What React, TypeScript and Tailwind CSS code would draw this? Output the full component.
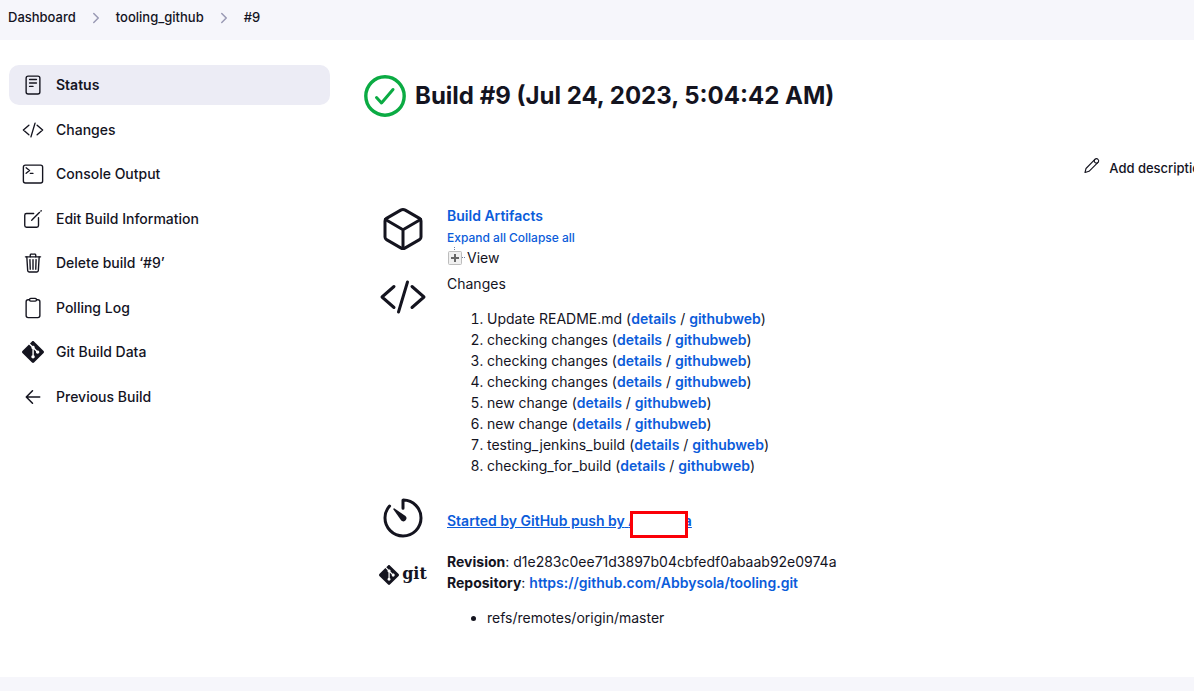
import type { ReactNode } from "react";
import {
  IoChevronForwardOutline,
  IoClipboardOutline,
  IoCodeSlashOutline,
  IoCreateOutline,
  IoCubeOutline,
  IoReaderOutline,
  IoTerminalOutline,
  IoTimerOutline,
  IoTrashOutline,
} from "react-icons/io5";
import { SiGit } from "react-icons/si";

function BackIcon() {
  return (
    <svg viewBox="0 0 512 512" className="size-[22px]" fill="none" stroke="currentColor" strokeWidth="36" strokeLinecap="round" strokeLinejoin="round">
      <path d="M244 400 100 256l144-144M120 256h292" />
    </svg>
  );
}

const crumbs = ["Dashboard", "tooling_github", "#9"];

const tasks: { label: string; icon: ReactNode; active?: boolean }[] = [
  { label: "Status", icon: <IoReaderOutline className="size-[22px]" />, active: true },
  { label: "Changes", icon: <IoCodeSlashOutline className="size-[22px]" /> },
  { label: "Console Output", icon: <IoTerminalOutline className="size-[22px]" /> },
  { label: "Edit Build Information", icon: <IoCreateOutline className="size-[22px]" /> },
  { label: "Delete build ‘#9’", icon: <IoTrashOutline className="size-[22px]" /> },
  { label: "Polling Log", icon: <IoClipboardOutline className="size-[22px]" /> },
  { label: "Git Build Data", icon: <SiGit className="size-[22px]" /> },
  { label: "Previous Build", icon: <BackIcon /> },
];

const changes = [
  "Update README.md",
  "checking changes",
  "checking changes",
  "checking changes",
  "new change",
  "new change",
  "testing_jenkins_build",
  "checking_for_build",
];

function Link({ children, className = "font-semibold" }: { children: ReactNode; className?: string }) {
  return (
    <a href="#" className={`text-[#0b5cda] ${className}`}>
      {children}
    </a>
  );
}

function Section({ icon, children, className = "" }: { icon: ReactNode; children: ReactNode; className?: string }) {
  return (
    <section className={`flex items-start gap-5 ${className}`}>
      <div className="flex size-12 shrink-0 items-center justify-center">{icon}</div>
      <div className="min-w-0">{children}</div>
    </section>
  );
}

function SuccessIcon() {
  return (
    <svg viewBox="0 0 42 42" className="size-[42px] shrink-0" fill="none" stroke="#0bab43" strokeLinecap="round" strokeLinejoin="round">
      <circle cx="21" cy="21" r="19.2" strokeWidth="3.4" />
      <path d="M12.5 22.5 17.5 28 29 14.5" strokeWidth="3" />
    </svg>
  );
}

function PencilIcon() {
  return (
    <svg viewBox="0 0 16 16" className="size-4" fill="none" stroke="currentColor" strokeWidth="1.1" strokeLinecap="round" strokeLinejoin="round">
      <path d="M1 15.5 2 11.5 10.9 2.3a2.1 2.1 0 0 1 3.1 0 2.1 2.1 0 0 1 0 3.1L5 14.3Z" />
      <path d="M10.9 2.3a2.2 2.2 0 0 0 0 3.1 2.2 2.2 0 0 0 3.1 0" />
    </svg>
  );
}

function ExpandIcon() {
  return (
    <svg viewBox="0 0 18 20" className="h-5 w-[18px]">
      <path d="M7.5 0v4M15 10.5h3" stroke="#7480a0" strokeDasharray="1 1" />
      <rect x="1.5" y="4.5" width="13" height="13" rx="1" fill="#f0f0f0" stroke="#bdbdbd" />
      <path d="M4 11h8M8 7v8" stroke="#666" strokeWidth="2" />
    </svg>
  );
}

export default function App() {
  return (
    <div className="min-h-screen overflow-x-hidden bg-[#f6f6fb] font-['Inter',sans-serif] text-sm leading-[21px] text-[#14141f]">
      <nav aria-label="Breadcrumb" className="h-10 px-2 pt-[7px]">
        <ol className="flex items-center text-[13px] font-medium">
          {crumbs.map((crumb, i) => (
            <li key={crumb} className="flex items-center">
              {i > 0 && <IoChevronForwardOutline className="mx-3 size-4 text-[#9a9ab4]" />}
              <a href="#">{crumb}</a>
            </li>
          ))}
        </ol>
      </nav>

      <div className="flex bg-white pt-[25px] pb-[49px]">
        <aside className="ml-[9px] w-[321px] shrink-0">
          <ul className="grid min-h-[352px] content-between">
            {tasks.map((task) => (
              <li key={task.label}>
                <a
                  href="#"
                  className={`flex h-10 items-center gap-[11px] rounded-[10px] px-3 leading-5 ${
                    task.active ? "bg-[#ececf5] font-semibold" : "font-medium"
                  }`}
                >
                  <span className="flex size-6 items-center justify-center">{task.icon}</span>
                  {task.label}
                </a>
              </li>
            ))}
          </ul>
        </aside>

        <main className="ml-[34px] min-w-0 flex-1">
          <h1 className="mt-[10px] flex items-center gap-[9px] text-2xl leading-[42px] font-bold">
            <SuccessIcon />
            Build #9 (Jul 24, 2023, 5:04:42 AM)
          </h1>

          <div className="mt-10 -mr-[14px] flex justify-end">
            <a href="#" className="flex gap-[9px] text-[13px] font-medium whitespace-nowrap">
              <PencilIcon />
              <span className="pt-px">Add description</span>
            </a>
          </div>

          <div className="ml-[15px]">
            <Section className="mt-[26px]" icon={<IoCubeOutline className="size-12" />}>
              <p>
                <Link>Build Artifacts</Link>
              </p>
              <p className="flex gap-[3px] pt-[2px] text-xs leading-[19px]">
                <Link className="font-medium">Expand all</Link>
                <Link className="font-medium">Collapse all</Link>
              </p>
              <div className="flex items-start gap-[2px]">
                <button type="button" aria-label="Expand View" className="shrink-0">
                  <ExpandIcon />
                </button>
                View
              </div>
            </Section>

            <Section className="mt-[5px]" icon={<IoCodeSlashOutline className="size-12" />}>
              <p>Changes</p>
              <ol className="mt-[14px] list-decimal pl-10">
                {changes.map((message, i) => (
                  <li key={i}>
                    {message} (<Link>details</Link> / <Link>githubweb</Link>)
                  </li>
                ))}
              </ol>
            </Section>

            <Section className="mt-[18px]" icon={<IoTimerOutline className="size-12" />}>
              <p className="pt-4 whitespace-nowrap">
                <Link className="font-semibold underline">
                  Started by GitHub push by{" "}
                  <span className="relative inline-block underline">
                    Abbysola
                    <span className="absolute top-px right-1 left-[2px] h-[27px] border-[3px] border-[#fb0007] bg-white" />
                  </span>
                </Link>
              </p>
            </Section>

            <Section
              className="mt-[9px]"
              icon={
                <span className="flex items-center gap-[3px]">
                  <SiGit className="size-5" />
                  <span className="pb-[2px] font-['DejaVu_Serif',serif] text-base leading-5 font-bold">git</span>
                </span>
              }
            >
              <p>
                <b>Revision</b>: d1e283c0ee71d3897b04cbfedf0abaab92e0974a
              </p>
              <p>
                <b>Repository</b>: <Link>https://github.com/Abbysola/tooling.git</Link>
              </p>
              <ul className="mt-[14px] list-disc pl-10">
                <li>refs/remotes/origin/master</li>
              </ul>
            </Section>
          </div>
        </main>
      </div>
    </div>
  );
}
